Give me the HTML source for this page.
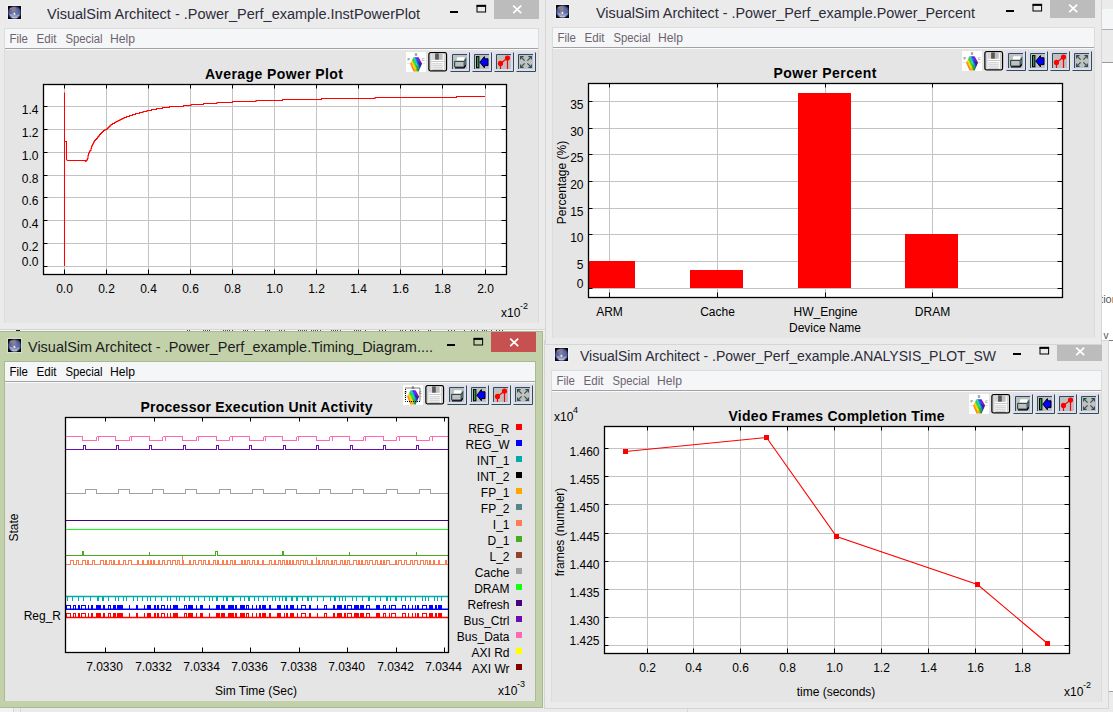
<!DOCTYPE html>
<html><head><meta charset="utf-8"><title>VisualSim Architect plots</title>
<style>
html,body{margin:0;padding:0}
body{width:1113px;height:712px;overflow:hidden;background:#ececec;font-family:"Liberation Sans", sans-serif}
#root{position:relative;width:1113px;height:712px;overflow:hidden;background:#ececec}
.a{position:absolute;display:block}
svg text{white-space:pre}
</style></head><body><div id="root">

<div class="a" style="left:0;top:329px;width:545px;height:2px;background:#f4f4f4"></div>
<svg class="a" style="left:0;top:0" width="560" height="332"><path d="M187 330.5 h1 M189 330.5 h1 M203 330.5 h1 M205 330.5 h1 M207 330.5 h1 M209 330.5 h1 M223 330.5 h1 M225 330.5 h1 M227 330.5 h1 M229 330.5 h1 M232 330.5 h1 M243 330.5 h1 M245 330.5 h1 M247 330.5 h1 M254 330.5 h1 M265 330.5 h1 M267 330.5 h1 M269 330.5 h1 M279 330.5 h1 M281 330.5 h1 M284 330.5 h1 M298 330.5 h1 M300 330.5 h1 M302 330.5 h1 M304 330.5 h1 M306 330.5 h1 M311 330.5 h1 M313 330.5 h1 M315 330.5 h1 M317 330.5 h1 M320 330.5 h1 M331 330.5 h1 M333 330.5 h1 M335 330.5 h1 M337 330.5 h1 M340 330.5 h1 M354 330.5 h1 M356 330.5 h1 M358 330.5 h1 M360 330.5 h1 M365 330.5 h1 M379 330.5 h1 M382 330.5 h1 M385 330.5 h1 M400 330.5 h1 M402 330.5 h1 M405 330.5 h1 M410 330.5 h1 M412 330.5 h1 M415 330.5 h1 M418 330.5 h1 M428 330.5 h1 M430 330.5 h1 M448 330.5 h1 M451 330.5 h1 M454 330.5 h1 M464 330.5 h1 M471 330.5 h1 M474 330.5 h1 M477 330.5 h1 M482 330.5 h1 M484 330.5 h1 M486 330.5 h1 M491 330.5 h1 M496 330.5 h1 M499 330.5 h1 M502 330.5 h1 " stroke="#3a2a3a" stroke-width="1" opacity=".85" shape-rendering="crispEdges"/></svg>
<div class="a" style="left:16px;top:330px;width:4px;height:1px;background:#222"></div>
<div class="a" style="left:1102px;top:0;width:11px;height:344px;background:#ffffff"></div>
<div class="a" style="left:1102px;top:0;width:11px;height:9px;background:#ebebeb"></div>
<div class="a" style="left:1102px;top:9px;width:11px;height:20px;background:#f5f6f7"></div>
<div class="a" style="left:1102px;top:29px;width:11px;height:1px;background:#b0b0b0"></div>
<div class="a" style="left:1102px;top:30px;width:11px;height:32px;background:#ebebeb"></div>
<div class="a" style="left:1102px;top:62px;width:11px;height:1px;background:#9a9a9a"></div>
<div class="a" style="left:1102px;top:292px;font-size:11px;color:#555;line-height:14px;white-space:nowrap;font-family:"Liberation Sans", sans-serif"><span style="margin-left:-8px">ation</span></div>
<div class="a" style="left:1103.5px;top:329px;font-size:10px;color:#555;line-height:14px;white-space:nowrap;font-family:"Liberation Sans", sans-serif">v_</div>
<div class="a" style="left:1102px;top:341px;width:7px;height:4px;background:#e4e4e4"></div>
<div class="a" style="left:1109px;top:344px;width:4px;height:347px;background:#ffffff"></div>
<div class="a" style="left:1109px;top:691px;width:4px;height:1px;background:#a0a0a0"></div>
<div class="a" style="left:1109px;top:692px;width:4px;height:20px;background:#ececec"></div>
<div class="a" style="left:0;top:708px;width:1113px;height:4px;background:#ebebeb"></div>
<div class="a" style="left:0;top:708px;width:13px;height:4px;background:#f3f3f3"></div>
<div class="a" style="left:13px;top:708px;width:1px;height:4px;background:#d6d6d6"></div>
<div class="a" style="left:20px;top:708px;width:1px;height:4px;background:#d6d6d6"></div>
<div class="a" style="left:687px;top:709px;width:1px;height:3px;background:#d6d6d6"></div>
<div class="a" style="left:544px;top:340px;width:565px;height:369px;background:#ebebeb;box-shadow:inset 0 0 0 1px #d5d5d5"></div><div class="a" style="left:551px;top:370px;width:551px;height:332px;background:#dcdcdc"></div><svg class="a" style="left:554px;top:347px" width="15" height="15" viewBox="-1 -1 15 15"><defs><radialGradient id="eg" cx="0.5" cy="0.5" r="0.5"><stop offset="0" stop-color="#7682b0"/><stop offset="0.75" stop-color="#55629e"/><stop offset="1" stop-color="#2c346c"/></radialGradient><clipPath id="ec"><rect x="0.2" y="0.2" width="12.6" height="12.6" rx="5.4"/></clipPath></defs><rect x="-0.7" y="-0.7" width="14.4" height="14.4" fill="none" stroke="#ffffff" stroke-opacity="0.45" stroke-width="0.8"/><rect width="13" height="13" fill="#050508"/><g clip-path="url(#ec)"><rect width="13" height="13" fill="url(#eg)"/><path d="M1.6 2.6 Q4.6 0.6 7.6 1.4 L8 2.6 Q5 2.2 2.2 3.8 Z" fill="#b88a6a" opacity=".85"/><path d="M3.2 3.4 L7.4 2.8 L7.8 4.6 L5.2 5 L3.4 4.6 Z" fill="#8a8aa8" opacity=".8"/><path d="M3.8 5.8 L5.6 5.2 L6 6.6 L4.6 7.2 Z" fill="#c87838" opacity=".9"/><path d="M5.2 7.2 L6.8 6.8 L7.6 8.6 L6.6 9.2 Z" fill="#f4f6fa"/><path d="M1.2 7.6 Q3.4 8.4 5.4 8 L6.4 9.6 Q9 9.2 11.6 7.8 L11.4 9.8 Q9 12.6 4 12 Q1.8 10.6 1.2 7.6 Z" fill="#a4acc8" opacity=".85"/><path d="M3.4 11 Q6.4 11.8 9.6 11 L8.6 12.4 H4.6 Z" fill="#d4dce8" opacity=".9"/></g></svg><svg class="a" style="left:580px;top:340px" width="420" height="31"><text x="0" y="21" font-size="15.5" fill="#2b2b3a" textLength="416" lengthAdjust="spacingAndGlyphs" font-family='"Liberation Sans", sans-serif'>VisualSim Architect - .Power_Perf_example.ANALYSIS_PLOT_SW</text></svg><div class="a" style="left:1057px;top:341px;width:45px;height:20px;background:#bcbcbc"></div><svg class="a" style="left:1057px;top:341px" width="45" height="20"><path d="M19.2 6.6 L27.2 14.2 M27.2 6.6 L19.2 14.2" stroke="#fff" stroke-width="1.7" fill="none"/></svg><svg class="a" style="left:1038.5px;top:346.3px" width="12" height="10"><rect x="1" y="2" width="8.6" height="6" fill="none" stroke="#000" stroke-width="1"/><rect x="0.5" y="0.8" width="9.6" height="2" fill="#000"/></svg><div class="a" style="left:1013px;top:352.6px;width:8px;height:2.6px;background:#000"></div><div class="a" style="left:552px;top:371px;width:549px;height:19px;background:#f5f6f7"></div><div class="a" style="left:552px;top:390px;width:549px;height:1px;background:#a2a2a2"></div><div class="a" style="left:552px;top:391px;width:549px;height:1px;background:#fafafa"></div><svg class="a" style="left:552px;top:371px" width="160" height="19"><g font-size="12.5" fill="#6d6370" font-family='"Liberation Sans", sans-serif'><text x="4.5" y="14.2" textLength="18.5" lengthAdjust="spacingAndGlyphs">File</text><text x="31.5" y="14.2" textLength="20" lengthAdjust="spacingAndGlyphs">Edit</text><text x="60.5" y="14.2" textLength="37" lengthAdjust="spacingAndGlyphs">Special</text><text x="105" y="14.2" textLength="25" lengthAdjust="spacingAndGlyphs">Help</text></g></svg><div class="a" style="left:552px;top:392px;width:549px;height:310px;background:#e5e5e5"></div><svg class="a" style="left:969px;top:394px" width="20" height="20" viewBox="0 0 20 20"><rect width="20" height="20" fill="#ffffff"/><defs><clipPath id="hx"><path d="M7.4 5.2 H12.6 L16 11.6 L12.6 19.6 H7.6 L4.2 11.8 Z"/></clipPath><linearGradient id="hg" gradientUnits="userSpaceOnUse" x1="3.8" y1="15" x2="16.2" y2="9"><stop offset="0" stop-color="#d01010"/><stop offset="0.14" stop-color="#ff6a00"/><stop offset="0.3" stop-color="#ffe400"/><stop offset="0.44" stop-color="#28d028"/><stop offset="0.56" stop-color="#20dcc0"/><stop offset="0.7" stop-color="#2038ff"/><stop offset="0.85" stop-color="#a018e0"/><stop offset="1" stop-color="#e0009c"/></linearGradient><linearGradient id="hd" x1="0" y1="0" x2="1" y2="0.35"><stop offset="0.62" stop-color="#100030" stop-opacity="0"/><stop offset="1" stop-color="#100030" stop-opacity="0.55"/></linearGradient></defs><g clip-path="url(#hx)"><rect x="3" y="4" width="14" height="16" fill="url(#hg)"/><path d="M4 9 L16 15 M4 12.5 L14 18 M7 5.5 L16 11 M4 15.5 L10 19.5" stroke="#fff" stroke-opacity=".25" stroke-width=".6"/><rect x="3" y="4" width="14" height="16" fill="url(#hd)"/></g><text x="10" y="4.2" font-size="3.6" text-anchor="middle" fill="#333" font-family='"Liberation Sans", sans-serif'>B</text><text x="2.8" y="8.8" font-size="3.6" text-anchor="middle" fill="#333" font-family='"Liberation Sans", sans-serif'>P</text><text x="17.2" y="8.8" font-size="3.6" text-anchor="middle" fill="#333" font-family='"Liberation Sans", sans-serif'>C</text><path d="M1 11.5 H3.6 M16.6 11.5 H19" stroke="#ccc" stroke-width=".6"/></svg><svg class="a" style="left:991px;top:394px" width="20" height="20" viewBox="0 0 20 20"><rect x="0.9" y="0.7" width="17.6" height="18.2" rx="1.7" fill="#fff" stroke="#000" stroke-width="1.3"/><rect x="2" y="1.6" width="1.5" height="16.6" fill="#cfcfcf"/><rect x="15.9" y="1.6" width="1.5" height="16.6" fill="#cfcfcf"/><rect x="3.5" y="1.4" width="11.6" height="6.4" fill="#d6d6d6"/><rect x="7.1" y="1.4" width="3.8" height="6.3" fill="#585858"/><rect x="10.9" y="1.4" width="3.3" height="6.3" fill="#bebebe"/><rect x="3.5" y="9" width="12.4" height="1" fill="#c8c8c8"/><rect x="4.2" y="11.4" width="10.6" height="0.9" fill="#bdbdbd"/><rect x="4.2" y="13.4" width="10.6" height="0.9" fill="#bdbdbd"/><rect x="4.2" y="15.4" width="10.6" height="0.9" fill="#bdbdbd"/><rect x="4.2" y="17.2" width="10.6" height="0.8" fill="#bdbdbd"/></svg><svg class="a" style="left:1013px;top:394px" width="20" height="20" viewBox="0 0 20 20"><rect width="20" height="20" fill="#dcdcf4"/><rect x="3" y="3" width="14" height="14" fill="#c0c0c0"/><path d="M2.5 17 V2.5 H17" fill="none" stroke="#2f4f4f" stroke-width="1"/><path d="M0.5 19.5 H19.5 V0.5" fill="none" stroke="#2f4f4f" stroke-width="1"/><path d="M6.2 9.4 L7.4 5.2 H14.6 L13.6 9.4 Z" fill="#fff"/><rect x="4.6" y="9.4" width="9.6" height="5.6" rx="0.8" fill="#c0c0c0" stroke="#2f4f4f" stroke-width="1.2"/><path d="M14.2 9.4 L15.8 7 V12.6 L14.2 15" fill="none" stroke="#2f4f4f" stroke-width="1.1"/><path d="M5 15.8 H14 L15.8 13.4" fill="none" stroke="#000" stroke-width="1.2"/></svg><svg class="a" style="left:1035px;top:394px" width="20" height="20" viewBox="0 0 20 20"><rect width="20" height="20" fill="#dcdcf4"/><rect x="3" y="3" width="14" height="14" fill="#c0c0c0"/><path d="M2.5 17 V2.5 H17" fill="none" stroke="#2f4f4f" stroke-width="1"/><path d="M0.5 19.5 H19.5 V0.5" fill="none" stroke="#2f4f4f" stroke-width="1"/><rect x="4.5" y="4.6" width="2.4" height="11.2" fill="#2e9a50" stroke="#000" stroke-width="1"/><path d="M7.8 10.2 L12.4 4.6 V6.8 H16 V13.6 H12.4 V15.8 Z" fill="#0000ff" stroke="#000" stroke-width="1" stroke-linejoin="miter"/></svg><svg class="a" style="left:1057px;top:394px" width="20" height="20" viewBox="0 0 20 20"><rect width="20" height="20" fill="#dcdcf4"/><rect x="3" y="3" width="14" height="14" fill="#c0c0c0"/><path d="M2.5 17 V2.5 H17" fill="none" stroke="#2f4f4f" stroke-width="1"/><path d="M0.5 19.5 H19.5 V0.5" fill="none" stroke="#2f4f4f" stroke-width="1"/><path d="M6.5 11.4 V17 M13.5 6 V17 M6.5 11.4 L13.5 6" stroke="#ff0000" stroke-width="1.2" fill="none"/><circle cx="6.5" cy="11.4" r="2.6" fill="#ff0000"/><circle cx="13.5" cy="6" r="2.6" fill="#ff0000"/></svg><svg class="a" style="left:1079px;top:394px" width="20" height="20" viewBox="0 0 20 20"><rect width="20" height="20" fill="#dcdcf4"/><rect x="3" y="3" width="14" height="14" fill="#c0c0c0"/><path d="M2.5 17 V2.5 H17" fill="none" stroke="#2f4f4f" stroke-width="1"/><path d="M0.5 19.5 H19.5 V0.5" fill="none" stroke="#2f4f4f" stroke-width="1"/><g stroke="#2f4f4f" stroke-width="1.1" fill="none"><path d="M8.6 8.6 L4.6 4.6 M4.6 7.6 V4.6 H7.6"/><path d="M11.4 8.6 L15.4 4.6 M12.4 4.6 H15.4 V7.6"/><path d="M8.6 11.4 L4.6 15.4 M4.6 12.4 V15.4 H7.6"/><path d="M11.4 11.4 L15.4 15.4 M12.4 15.4 H15.4 V12.4"/></g></svg>
<div class="a" style="left:-3px;top:-2px;width:549px;height:332px;background:#ebebeb;box-shadow:inset 0 0 0 1px #d5d5d5"></div><div class="a" style="left:4px;top:28px;width:535px;height:295px;background:#dcdcdc"></div><svg class="a" style="left:7px;top:5px" width="15" height="15" viewBox="-1 -1 15 15"><defs><radialGradient id="eg" cx="0.5" cy="0.5" r="0.5"><stop offset="0" stop-color="#7682b0"/><stop offset="0.75" stop-color="#55629e"/><stop offset="1" stop-color="#2c346c"/></radialGradient><clipPath id="ec"><rect x="0.2" y="0.2" width="12.6" height="12.6" rx="5.4"/></clipPath></defs><rect x="-0.7" y="-0.7" width="14.4" height="14.4" fill="none" stroke="#ffffff" stroke-opacity="0.45" stroke-width="0.8"/><rect width="13" height="13" fill="#050508"/><g clip-path="url(#ec)"><rect width="13" height="13" fill="url(#eg)"/><path d="M1.6 2.6 Q4.6 0.6 7.6 1.4 L8 2.6 Q5 2.2 2.2 3.8 Z" fill="#b88a6a" opacity=".85"/><path d="M3.2 3.4 L7.4 2.8 L7.8 4.6 L5.2 5 L3.4 4.6 Z" fill="#8a8aa8" opacity=".8"/><path d="M3.8 5.8 L5.6 5.2 L6 6.6 L4.6 7.2 Z" fill="#c87838" opacity=".9"/><path d="M5.2 7.2 L6.8 6.8 L7.6 8.6 L6.6 9.2 Z" fill="#f4f6fa"/><path d="M1.2 7.6 Q3.4 8.4 5.4 8 L6.4 9.6 Q9 9.2 11.6 7.8 L11.4 9.8 Q9 12.6 4 12 Q1.8 10.6 1.2 7.6 Z" fill="#a4acc8" opacity=".85"/><path d="M3.4 11 Q6.4 11.8 9.6 11 L8.6 12.4 H4.6 Z" fill="#d4dce8" opacity=".9"/></g></svg><svg class="a" style="left:47px;top:-2px" width="377" height="31"><text x="0" y="21" font-size="15.5" fill="#2b2b3a" textLength="373" lengthAdjust="spacingAndGlyphs" font-family='"Liberation Sans", sans-serif'>VisualSim Architect - .Power_Perf_example.InstPowerPlot</text></svg><div class="a" style="left:494px;top:-1px;width:45px;height:20px;background:#bcbcbc"></div><svg class="a" style="left:494px;top:-1px" width="45" height="20"><path d="M19.2 6.6 L27.2 14.2 M27.2 6.6 L19.2 14.2" stroke="#fff" stroke-width="1.7" fill="none"/></svg><svg class="a" style="left:475.5px;top:4.3px" width="12" height="10"><rect x="1" y="2" width="8.6" height="6" fill="none" stroke="#000" stroke-width="1"/><rect x="0.5" y="0.8" width="9.6" height="2" fill="#000"/></svg><div class="a" style="left:450px;top:10.6px;width:8px;height:2.6px;background:#000"></div><div class="a" style="left:5px;top:29px;width:533px;height:19px;background:#f5f6f7"></div><div class="a" style="left:5px;top:48px;width:533px;height:1px;background:#a2a2a2"></div><div class="a" style="left:5px;top:49px;width:533px;height:1px;background:#fafafa"></div><svg class="a" style="left:5px;top:29px" width="160" height="19"><g font-size="12.5" fill="#6d6370" font-family='"Liberation Sans", sans-serif'><text x="4.5" y="14.2" textLength="18.5" lengthAdjust="spacingAndGlyphs">File</text><text x="31.5" y="14.2" textLength="20" lengthAdjust="spacingAndGlyphs">Edit</text><text x="60.5" y="14.2" textLength="37" lengthAdjust="spacingAndGlyphs">Special</text><text x="105" y="14.2" textLength="25" lengthAdjust="spacingAndGlyphs">Help</text></g></svg><div class="a" style="left:5px;top:50px;width:533px;height:273px;background:#e5e5e5"></div><svg class="a" style="left:406px;top:52px" width="20" height="20" viewBox="0 0 20 20"><rect width="20" height="20" fill="#ffffff"/><defs><clipPath id="hx"><path d="M7.4 5.2 H12.6 L16 11.6 L12.6 19.6 H7.6 L4.2 11.8 Z"/></clipPath><linearGradient id="hg" gradientUnits="userSpaceOnUse" x1="3.8" y1="15" x2="16.2" y2="9"><stop offset="0" stop-color="#d01010"/><stop offset="0.14" stop-color="#ff6a00"/><stop offset="0.3" stop-color="#ffe400"/><stop offset="0.44" stop-color="#28d028"/><stop offset="0.56" stop-color="#20dcc0"/><stop offset="0.7" stop-color="#2038ff"/><stop offset="0.85" stop-color="#a018e0"/><stop offset="1" stop-color="#e0009c"/></linearGradient><linearGradient id="hd" x1="0" y1="0" x2="1" y2="0.35"><stop offset="0.62" stop-color="#100030" stop-opacity="0"/><stop offset="1" stop-color="#100030" stop-opacity="0.55"/></linearGradient></defs><g clip-path="url(#hx)"><rect x="3" y="4" width="14" height="16" fill="url(#hg)"/><path d="M4 9 L16 15 M4 12.5 L14 18 M7 5.5 L16 11 M4 15.5 L10 19.5" stroke="#fff" stroke-opacity=".25" stroke-width=".6"/><rect x="3" y="4" width="14" height="16" fill="url(#hd)"/></g><text x="10" y="4.2" font-size="3.6" text-anchor="middle" fill="#333" font-family='"Liberation Sans", sans-serif'>B</text><text x="2.8" y="8.8" font-size="3.6" text-anchor="middle" fill="#333" font-family='"Liberation Sans", sans-serif'>P</text><text x="17.2" y="8.8" font-size="3.6" text-anchor="middle" fill="#333" font-family='"Liberation Sans", sans-serif'>C</text><path d="M1 11.5 H3.6 M16.6 11.5 H19" stroke="#ccc" stroke-width=".6"/></svg><svg class="a" style="left:428px;top:52px" width="20" height="20" viewBox="0 0 20 20"><rect x="0.9" y="0.7" width="17.6" height="18.2" rx="1.7" fill="#fff" stroke="#000" stroke-width="1.3"/><rect x="2" y="1.6" width="1.5" height="16.6" fill="#cfcfcf"/><rect x="15.9" y="1.6" width="1.5" height="16.6" fill="#cfcfcf"/><rect x="3.5" y="1.4" width="11.6" height="6.4" fill="#d6d6d6"/><rect x="7.1" y="1.4" width="3.8" height="6.3" fill="#585858"/><rect x="10.9" y="1.4" width="3.3" height="6.3" fill="#bebebe"/><rect x="3.5" y="9" width="12.4" height="1" fill="#c8c8c8"/><rect x="4.2" y="11.4" width="10.6" height="0.9" fill="#bdbdbd"/><rect x="4.2" y="13.4" width="10.6" height="0.9" fill="#bdbdbd"/><rect x="4.2" y="15.4" width="10.6" height="0.9" fill="#bdbdbd"/><rect x="4.2" y="17.2" width="10.6" height="0.8" fill="#bdbdbd"/></svg><svg class="a" style="left:450px;top:52px" width="20" height="20" viewBox="0 0 20 20"><rect width="20" height="20" fill="#dcdcf4"/><rect x="3" y="3" width="14" height="14" fill="#c0c0c0"/><path d="M2.5 17 V2.5 H17" fill="none" stroke="#2f4f4f" stroke-width="1"/><path d="M0.5 19.5 H19.5 V0.5" fill="none" stroke="#2f4f4f" stroke-width="1"/><path d="M6.2 9.4 L7.4 5.2 H14.6 L13.6 9.4 Z" fill="#fff"/><rect x="4.6" y="9.4" width="9.6" height="5.6" rx="0.8" fill="#c0c0c0" stroke="#2f4f4f" stroke-width="1.2"/><path d="M14.2 9.4 L15.8 7 V12.6 L14.2 15" fill="none" stroke="#2f4f4f" stroke-width="1.1"/><path d="M5 15.8 H14 L15.8 13.4" fill="none" stroke="#000" stroke-width="1.2"/></svg><svg class="a" style="left:472px;top:52px" width="20" height="20" viewBox="0 0 20 20"><rect width="20" height="20" fill="#dcdcf4"/><rect x="3" y="3" width="14" height="14" fill="#c0c0c0"/><path d="M2.5 17 V2.5 H17" fill="none" stroke="#2f4f4f" stroke-width="1"/><path d="M0.5 19.5 H19.5 V0.5" fill="none" stroke="#2f4f4f" stroke-width="1"/><rect x="4.5" y="4.6" width="2.4" height="11.2" fill="#2e9a50" stroke="#000" stroke-width="1"/><path d="M7.8 10.2 L12.4 4.6 V6.8 H16 V13.6 H12.4 V15.8 Z" fill="#0000ff" stroke="#000" stroke-width="1" stroke-linejoin="miter"/></svg><svg class="a" style="left:494px;top:52px" width="20" height="20" viewBox="0 0 20 20"><rect width="20" height="20" fill="#dcdcf4"/><rect x="3" y="3" width="14" height="14" fill="#c0c0c0"/><path d="M2.5 17 V2.5 H17" fill="none" stroke="#2f4f4f" stroke-width="1"/><path d="M0.5 19.5 H19.5 V0.5" fill="none" stroke="#2f4f4f" stroke-width="1"/><path d="M6.5 11.4 V17 M13.5 6 V17 M6.5 11.4 L13.5 6" stroke="#ff0000" stroke-width="1.2" fill="none"/><circle cx="6.5" cy="11.4" r="2.6" fill="#ff0000"/><circle cx="13.5" cy="6" r="2.6" fill="#ff0000"/></svg><svg class="a" style="left:516px;top:52px" width="20" height="20" viewBox="0 0 20 20"><rect width="20" height="20" fill="#dcdcf4"/><rect x="3" y="3" width="14" height="14" fill="#c0c0c0"/><path d="M2.5 17 V2.5 H17" fill="none" stroke="#2f4f4f" stroke-width="1"/><path d="M0.5 19.5 H19.5 V0.5" fill="none" stroke="#2f4f4f" stroke-width="1"/><g stroke="#2f4f4f" stroke-width="1.1" fill="none"><path d="M8.6 8.6 L4.6 4.6 M4.6 7.6 V4.6 H7.6"/><path d="M11.4 8.6 L15.4 4.6 M12.4 4.6 H15.4 V7.6"/><path d="M8.6 11.4 L4.6 15.4 M4.6 12.4 V15.4 H7.6"/><path d="M11.4 11.4 L15.4 15.4 M12.4 15.4 H15.4 V12.4"/></g></svg>
<div class="a" style="left:545px;top:-3px;width:557px;height:348px;background:#ebebeb;box-shadow:inset 0 0 0 1px #d5d5d5"></div><div class="a" style="left:552px;top:27px;width:543px;height:311px;background:#dcdcdc"></div><svg class="a" style="left:555px;top:4px" width="15" height="15" viewBox="-1 -1 15 15"><defs><radialGradient id="eg" cx="0.5" cy="0.5" r="0.5"><stop offset="0" stop-color="#7682b0"/><stop offset="0.75" stop-color="#55629e"/><stop offset="1" stop-color="#2c346c"/></radialGradient><clipPath id="ec"><rect x="0.2" y="0.2" width="12.6" height="12.6" rx="5.4"/></clipPath></defs><rect x="-0.7" y="-0.7" width="14.4" height="14.4" fill="none" stroke="#ffffff" stroke-opacity="0.45" stroke-width="0.8"/><rect width="13" height="13" fill="#050508"/><g clip-path="url(#ec)"><rect width="13" height="13" fill="url(#eg)"/><path d="M1.6 2.6 Q4.6 0.6 7.6 1.4 L8 2.6 Q5 2.2 2.2 3.8 Z" fill="#b88a6a" opacity=".85"/><path d="M3.2 3.4 L7.4 2.8 L7.8 4.6 L5.2 5 L3.4 4.6 Z" fill="#8a8aa8" opacity=".8"/><path d="M3.8 5.8 L5.6 5.2 L6 6.6 L4.6 7.2 Z" fill="#c87838" opacity=".9"/><path d="M5.2 7.2 L6.8 6.8 L7.6 8.6 L6.6 9.2 Z" fill="#f4f6fa"/><path d="M1.2 7.6 Q3.4 8.4 5.4 8 L6.4 9.6 Q9 9.2 11.6 7.8 L11.4 9.8 Q9 12.6 4 12 Q1.8 10.6 1.2 7.6 Z" fill="#a4acc8" opacity=".85"/><path d="M3.4 11 Q6.4 11.8 9.6 11 L8.6 12.4 H4.6 Z" fill="#d4dce8" opacity=".9"/></g></svg><svg class="a" style="left:596px;top:-3px" width="383" height="31"><text x="0" y="21" font-size="15.5" fill="#2b2b3a" textLength="379" lengthAdjust="spacingAndGlyphs" font-family='"Liberation Sans", sans-serif'>VisualSim Architect - .Power_Perf_example.Power_Percent</text></svg><div class="a" style="left:1050px;top:-2px;width:45px;height:20px;background:#bcbcbc"></div><svg class="a" style="left:1050px;top:-2px" width="45" height="20"><path d="M19.2 6.6 L27.2 14.2 M27.2 6.6 L19.2 14.2" stroke="#fff" stroke-width="1.7" fill="none"/></svg><svg class="a" style="left:1031.5px;top:3.3px" width="12" height="10"><rect x="1" y="2" width="8.6" height="6" fill="none" stroke="#000" stroke-width="1"/><rect x="0.5" y="0.8" width="9.6" height="2" fill="#000"/></svg><div class="a" style="left:1006px;top:9.6px;width:8px;height:2.6px;background:#000"></div><div class="a" style="left:553px;top:28px;width:541px;height:19px;background:#f5f6f7"></div><div class="a" style="left:553px;top:47px;width:541px;height:1px;background:#a2a2a2"></div><div class="a" style="left:553px;top:48px;width:541px;height:1px;background:#fafafa"></div><svg class="a" style="left:553px;top:28px" width="160" height="19"><g font-size="12.5" fill="#6d6370" font-family='"Liberation Sans", sans-serif'><text x="4.5" y="14.2" textLength="18.5" lengthAdjust="spacingAndGlyphs">File</text><text x="31.5" y="14.2" textLength="20" lengthAdjust="spacingAndGlyphs">Edit</text><text x="60.5" y="14.2" textLength="37" lengthAdjust="spacingAndGlyphs">Special</text><text x="105" y="14.2" textLength="25" lengthAdjust="spacingAndGlyphs">Help</text></g></svg><div class="a" style="left:553px;top:49px;width:541px;height:289px;background:#e5e5e5"></div><svg class="a" style="left:962px;top:51px" width="20" height="20" viewBox="0 0 20 20"><rect width="20" height="20" fill="#ffffff"/><defs><clipPath id="hx"><path d="M7.4 5.2 H12.6 L16 11.6 L12.6 19.6 H7.6 L4.2 11.8 Z"/></clipPath><linearGradient id="hg" gradientUnits="userSpaceOnUse" x1="3.8" y1="15" x2="16.2" y2="9"><stop offset="0" stop-color="#d01010"/><stop offset="0.14" stop-color="#ff6a00"/><stop offset="0.3" stop-color="#ffe400"/><stop offset="0.44" stop-color="#28d028"/><stop offset="0.56" stop-color="#20dcc0"/><stop offset="0.7" stop-color="#2038ff"/><stop offset="0.85" stop-color="#a018e0"/><stop offset="1" stop-color="#e0009c"/></linearGradient><linearGradient id="hd" x1="0" y1="0" x2="1" y2="0.35"><stop offset="0.62" stop-color="#100030" stop-opacity="0"/><stop offset="1" stop-color="#100030" stop-opacity="0.55"/></linearGradient></defs><g clip-path="url(#hx)"><rect x="3" y="4" width="14" height="16" fill="url(#hg)"/><path d="M4 9 L16 15 M4 12.5 L14 18 M7 5.5 L16 11 M4 15.5 L10 19.5" stroke="#fff" stroke-opacity=".25" stroke-width=".6"/><rect x="3" y="4" width="14" height="16" fill="url(#hd)"/></g><text x="10" y="4.2" font-size="3.6" text-anchor="middle" fill="#333" font-family='"Liberation Sans", sans-serif'>B</text><text x="2.8" y="8.8" font-size="3.6" text-anchor="middle" fill="#333" font-family='"Liberation Sans", sans-serif'>P</text><text x="17.2" y="8.8" font-size="3.6" text-anchor="middle" fill="#333" font-family='"Liberation Sans", sans-serif'>C</text><path d="M1 11.5 H3.6 M16.6 11.5 H19" stroke="#ccc" stroke-width=".6"/></svg><svg class="a" style="left:984px;top:51px" width="20" height="20" viewBox="0 0 20 20"><rect x="0.9" y="0.7" width="17.6" height="18.2" rx="1.7" fill="#fff" stroke="#000" stroke-width="1.3"/><rect x="2" y="1.6" width="1.5" height="16.6" fill="#cfcfcf"/><rect x="15.9" y="1.6" width="1.5" height="16.6" fill="#cfcfcf"/><rect x="3.5" y="1.4" width="11.6" height="6.4" fill="#d6d6d6"/><rect x="7.1" y="1.4" width="3.8" height="6.3" fill="#585858"/><rect x="10.9" y="1.4" width="3.3" height="6.3" fill="#bebebe"/><rect x="3.5" y="9" width="12.4" height="1" fill="#c8c8c8"/><rect x="4.2" y="11.4" width="10.6" height="0.9" fill="#bdbdbd"/><rect x="4.2" y="13.4" width="10.6" height="0.9" fill="#bdbdbd"/><rect x="4.2" y="15.4" width="10.6" height="0.9" fill="#bdbdbd"/><rect x="4.2" y="17.2" width="10.6" height="0.8" fill="#bdbdbd"/></svg><svg class="a" style="left:1006px;top:51px" width="20" height="20" viewBox="0 0 20 20"><rect width="20" height="20" fill="#dcdcf4"/><rect x="3" y="3" width="14" height="14" fill="#c0c0c0"/><path d="M2.5 17 V2.5 H17" fill="none" stroke="#2f4f4f" stroke-width="1"/><path d="M0.5 19.5 H19.5 V0.5" fill="none" stroke="#2f4f4f" stroke-width="1"/><path d="M6.2 9.4 L7.4 5.2 H14.6 L13.6 9.4 Z" fill="#fff"/><rect x="4.6" y="9.4" width="9.6" height="5.6" rx="0.8" fill="#c0c0c0" stroke="#2f4f4f" stroke-width="1.2"/><path d="M14.2 9.4 L15.8 7 V12.6 L14.2 15" fill="none" stroke="#2f4f4f" stroke-width="1.1"/><path d="M5 15.8 H14 L15.8 13.4" fill="none" stroke="#000" stroke-width="1.2"/></svg><svg class="a" style="left:1028px;top:51px" width="20" height="20" viewBox="0 0 20 20"><rect width="20" height="20" fill="#dcdcf4"/><rect x="3" y="3" width="14" height="14" fill="#c0c0c0"/><path d="M2.5 17 V2.5 H17" fill="none" stroke="#2f4f4f" stroke-width="1"/><path d="M0.5 19.5 H19.5 V0.5" fill="none" stroke="#2f4f4f" stroke-width="1"/><rect x="4.5" y="4.6" width="2.4" height="11.2" fill="#2e9a50" stroke="#000" stroke-width="1"/><path d="M7.8 10.2 L12.4 4.6 V6.8 H16 V13.6 H12.4 V15.8 Z" fill="#0000ff" stroke="#000" stroke-width="1" stroke-linejoin="miter"/></svg><svg class="a" style="left:1050px;top:51px" width="20" height="20" viewBox="0 0 20 20"><rect width="20" height="20" fill="#dcdcf4"/><rect x="3" y="3" width="14" height="14" fill="#c0c0c0"/><path d="M2.5 17 V2.5 H17" fill="none" stroke="#2f4f4f" stroke-width="1"/><path d="M0.5 19.5 H19.5 V0.5" fill="none" stroke="#2f4f4f" stroke-width="1"/><path d="M6.5 11.4 V17 M13.5 6 V17 M6.5 11.4 L13.5 6" stroke="#ff0000" stroke-width="1.2" fill="none"/><circle cx="6.5" cy="11.4" r="2.6" fill="#ff0000"/><circle cx="13.5" cy="6" r="2.6" fill="#ff0000"/></svg><svg class="a" style="left:1072px;top:51px" width="20" height="20" viewBox="0 0 20 20"><rect width="20" height="20" fill="#dcdcf4"/><rect x="3" y="3" width="14" height="14" fill="#c0c0c0"/><path d="M2.5 17 V2.5 H17" fill="none" stroke="#2f4f4f" stroke-width="1"/><path d="M0.5 19.5 H19.5 V0.5" fill="none" stroke="#2f4f4f" stroke-width="1"/><g stroke="#2f4f4f" stroke-width="1.1" fill="none"><path d="M8.6 8.6 L4.6 4.6 M4.6 7.6 V4.6 H7.6"/><path d="M11.4 8.6 L15.4 4.6 M12.4 4.6 H15.4 V7.6"/><path d="M8.6 11.4 L4.6 15.4 M4.6 12.4 V15.4 H7.6"/><path d="M11.4 11.4 L15.4 15.4 M12.4 15.4 H15.4 V12.4"/></g></svg>
<div class="a" style="left:-3px;top:331px;width:546px;height:377px;background:#c3d1ab;box-shadow:inset 0 0 0 1px #a9b994"></div><div class="a" style="left:4px;top:361px;width:532px;height:340px;background:#a9b994"></div><svg class="a" style="left:7px;top:338px" width="15" height="15" viewBox="-1 -1 15 15"><defs><radialGradient id="eg" cx="0.5" cy="0.5" r="0.5"><stop offset="0" stop-color="#7682b0"/><stop offset="0.75" stop-color="#55629e"/><stop offset="1" stop-color="#2c346c"/></radialGradient><clipPath id="ec"><rect x="0.2" y="0.2" width="12.6" height="12.6" rx="5.4"/></clipPath></defs><rect x="-0.7" y="-0.7" width="14.4" height="14.4" fill="none" stroke="#ffffff" stroke-opacity="0.45" stroke-width="0.8"/><rect width="13" height="13" fill="#050508"/><g clip-path="url(#ec)"><rect width="13" height="13" fill="url(#eg)"/><path d="M1.6 2.6 Q4.6 0.6 7.6 1.4 L8 2.6 Q5 2.2 2.2 3.8 Z" fill="#b88a6a" opacity=".85"/><path d="M3.2 3.4 L7.4 2.8 L7.8 4.6 L5.2 5 L3.4 4.6 Z" fill="#8a8aa8" opacity=".8"/><path d="M3.8 5.8 L5.6 5.2 L6 6.6 L4.6 7.2 Z" fill="#c87838" opacity=".9"/><path d="M5.2 7.2 L6.8 6.8 L7.6 8.6 L6.6 9.2 Z" fill="#f4f6fa"/><path d="M1.2 7.6 Q3.4 8.4 5.4 8 L6.4 9.6 Q9 9.2 11.6 7.8 L11.4 9.8 Q9 12.6 4 12 Q1.8 10.6 1.2 7.6 Z" fill="#a4acc8" opacity=".85"/><path d="M3.4 11 Q6.4 11.8 9.6 11 L8.6 12.4 H4.6 Z" fill="#d4dce8" opacity=".9"/></g></svg><svg class="a" style="left:28px;top:331px" width="409" height="31"><text x="0" y="21" font-size="15.5" fill="#1c1c1c" textLength="405" lengthAdjust="spacingAndGlyphs" font-family='"Liberation Sans", sans-serif'>VisualSim Architect - .Power_Perf_example.Timing_Diagram....</text></svg><div class="a" style="left:491px;top:332px;width:45px;height:20px;background:#c75050"></div><svg class="a" style="left:491px;top:332px" width="45" height="20"><path d="M19.2 6.6 L27.2 14.2 M27.2 6.6 L19.2 14.2" stroke="#fff" stroke-width="1.7" fill="none"/></svg><svg class="a" style="left:472.5px;top:337.3px" width="12" height="10"><rect x="1" y="2" width="8.6" height="6" fill="none" stroke="#000" stroke-width="1"/><rect x="0.5" y="0.8" width="9.6" height="2" fill="#000"/></svg><div class="a" style="left:447px;top:343.6px;width:8px;height:2.6px;background:#000"></div><div class="a" style="left:5px;top:362px;width:530px;height:19px;background:#f5f6f7"></div><div class="a" style="left:5px;top:381px;width:530px;height:1px;background:#a2a2a2"></div><div class="a" style="left:5px;top:382px;width:530px;height:1px;background:#fafafa"></div><svg class="a" style="left:5px;top:362px" width="160" height="19"><g font-size="12.5" fill="#000" font-family='"Liberation Sans", sans-serif'><text x="4.5" y="14.2" textLength="18.5" lengthAdjust="spacingAndGlyphs">File</text><text x="31.5" y="14.2" textLength="20" lengthAdjust="spacingAndGlyphs">Edit</text><text x="60.5" y="14.2" textLength="37" lengthAdjust="spacingAndGlyphs">Special</text><text x="105" y="14.2" textLength="25" lengthAdjust="spacingAndGlyphs">Help</text></g></svg><div class="a" style="left:5px;top:383px;width:530px;height:318px;background:#e5e5e5"></div><svg class="a" style="left:403px;top:385px" width="20" height="20" viewBox="0 0 20 20"><rect width="20" height="20" fill="#ffffff"/><defs><clipPath id="hx"><path d="M7.4 5.2 H12.6 L16 11.6 L12.6 19.6 H7.6 L4.2 11.8 Z"/></clipPath><linearGradient id="hg" gradientUnits="userSpaceOnUse" x1="3.8" y1="15" x2="16.2" y2="9"><stop offset="0" stop-color="#d01010"/><stop offset="0.14" stop-color="#ff6a00"/><stop offset="0.3" stop-color="#ffe400"/><stop offset="0.44" stop-color="#28d028"/><stop offset="0.56" stop-color="#20dcc0"/><stop offset="0.7" stop-color="#2038ff"/><stop offset="0.85" stop-color="#a018e0"/><stop offset="1" stop-color="#e0009c"/></linearGradient><linearGradient id="hd" x1="0" y1="0" x2="1" y2="0.35"><stop offset="0.62" stop-color="#100030" stop-opacity="0"/><stop offset="1" stop-color="#100030" stop-opacity="0.55"/></linearGradient></defs><g clip-path="url(#hx)"><rect x="3" y="4" width="14" height="16" fill="url(#hg)"/><path d="M4 9 L16 15 M4 12.5 L14 18 M7 5.5 L16 11 M4 15.5 L10 19.5" stroke="#fff" stroke-opacity=".25" stroke-width=".6"/><rect x="3" y="4" width="14" height="16" fill="url(#hd)"/></g><text x="10" y="4.2" font-size="3.6" text-anchor="middle" fill="#333" font-family='"Liberation Sans", sans-serif'>B</text><text x="2.8" y="8.8" font-size="3.6" text-anchor="middle" fill="#333" font-family='"Liberation Sans", sans-serif'>P</text><text x="17.2" y="8.8" font-size="3.6" text-anchor="middle" fill="#333" font-family='"Liberation Sans", sans-serif'>C</text><path d="M1 11.5 H3.6 M16.6 11.5 H19" stroke="#ccc" stroke-width=".6"/><rect x="2.5" y="3" width="14.5" height="13.5" fill="none" stroke="#000" stroke-width="1" stroke-dasharray="1 1"/></svg><svg class="a" style="left:425px;top:385px" width="20" height="20" viewBox="0 0 20 20"><rect x="0.9" y="0.7" width="17.6" height="18.2" rx="1.7" fill="#fff" stroke="#000" stroke-width="1.3"/><rect x="2" y="1.6" width="1.5" height="16.6" fill="#cfcfcf"/><rect x="15.9" y="1.6" width="1.5" height="16.6" fill="#cfcfcf"/><rect x="3.5" y="1.4" width="11.6" height="6.4" fill="#d6d6d6"/><rect x="7.1" y="1.4" width="3.8" height="6.3" fill="#585858"/><rect x="10.9" y="1.4" width="3.3" height="6.3" fill="#bebebe"/><rect x="3.5" y="9" width="12.4" height="1" fill="#c8c8c8"/><rect x="4.2" y="11.4" width="10.6" height="0.9" fill="#bdbdbd"/><rect x="4.2" y="13.4" width="10.6" height="0.9" fill="#bdbdbd"/><rect x="4.2" y="15.4" width="10.6" height="0.9" fill="#bdbdbd"/><rect x="4.2" y="17.2" width="10.6" height="0.8" fill="#bdbdbd"/></svg><svg class="a" style="left:447px;top:385px" width="20" height="20" viewBox="0 0 20 20"><rect width="20" height="20" fill="#dcdcf4"/><rect x="3" y="3" width="14" height="14" fill="#c0c0c0"/><path d="M2.5 17 V2.5 H17" fill="none" stroke="#2f4f4f" stroke-width="1"/><path d="M0.5 19.5 H19.5 V0.5" fill="none" stroke="#2f4f4f" stroke-width="1"/><path d="M6.2 9.4 L7.4 5.2 H14.6 L13.6 9.4 Z" fill="#fff"/><rect x="4.6" y="9.4" width="9.6" height="5.6" rx="0.8" fill="#c0c0c0" stroke="#2f4f4f" stroke-width="1.2"/><path d="M14.2 9.4 L15.8 7 V12.6 L14.2 15" fill="none" stroke="#2f4f4f" stroke-width="1.1"/><path d="M5 15.8 H14 L15.8 13.4" fill="none" stroke="#000" stroke-width="1.2"/></svg><svg class="a" style="left:469px;top:385px" width="20" height="20" viewBox="0 0 20 20"><rect width="20" height="20" fill="#dcdcf4"/><rect x="3" y="3" width="14" height="14" fill="#c0c0c0"/><path d="M2.5 17 V2.5 H17" fill="none" stroke="#2f4f4f" stroke-width="1"/><path d="M0.5 19.5 H19.5 V0.5" fill="none" stroke="#2f4f4f" stroke-width="1"/><rect x="4.5" y="4.6" width="2.4" height="11.2" fill="#2e9a50" stroke="#000" stroke-width="1"/><path d="M7.8 10.2 L12.4 4.6 V6.8 H16 V13.6 H12.4 V15.8 Z" fill="#0000ff" stroke="#000" stroke-width="1" stroke-linejoin="miter"/></svg><svg class="a" style="left:491px;top:385px" width="20" height="20" viewBox="0 0 20 20"><rect width="20" height="20" fill="#dcdcf4"/><rect x="3" y="3" width="14" height="14" fill="#c0c0c0"/><path d="M2.5 17 V2.5 H17" fill="none" stroke="#2f4f4f" stroke-width="1"/><path d="M0.5 19.5 H19.5 V0.5" fill="none" stroke="#2f4f4f" stroke-width="1"/><path d="M6.5 11.4 V17 M13.5 6 V17 M6.5 11.4 L13.5 6" stroke="#ff0000" stroke-width="1.2" fill="none"/><circle cx="6.5" cy="11.4" r="2.6" fill="#ff0000"/><circle cx="13.5" cy="6" r="2.6" fill="#ff0000"/></svg><svg class="a" style="left:513px;top:385px" width="20" height="20" viewBox="0 0 20 20"><rect width="20" height="20" fill="#dcdcf4"/><rect x="3" y="3" width="14" height="14" fill="#c0c0c0"/><path d="M2.5 17 V2.5 H17" fill="none" stroke="#2f4f4f" stroke-width="1"/><path d="M0.5 19.5 H19.5 V0.5" fill="none" stroke="#2f4f4f" stroke-width="1"/><g stroke="#2f4f4f" stroke-width="1.1" fill="none"><path d="M8.6 8.6 L4.6 4.6 M4.6 7.6 V4.6 H7.6"/><path d="M11.4 8.6 L15.4 4.6 M12.4 4.6 H15.4 V7.6"/><path d="M8.6 11.4 L4.6 15.4 M4.6 12.4 V15.4 H7.6"/><path d="M11.4 11.4 L15.4 15.4 M12.4 15.4 H15.4 V12.4"/></g></svg>
<svg class="a plots" style="left:0;top:0" width="1113" height="712" viewBox="0 0 1113 712" font-family='"Liberation Sans", sans-serif' fill="#000">
<rect x="43" y="84" width="463" height="190" fill="#fff"/>
<path d="M64.5 84 V274" stroke="#c3c3c3" stroke-width="1"/><path d="M64.5 84 v4.5 M64.5 274 v-4.5" stroke="#000" stroke-width="1"/><path d="M106.5 84 V274" stroke="#c3c3c3" stroke-width="1"/><path d="M106.5 84 v4.5 M106.5 274 v-4.5" stroke="#000" stroke-width="1"/><path d="M148.5 84 V274" stroke="#c3c3c3" stroke-width="1"/><path d="M148.5 84 v4.5 M148.5 274 v-4.5" stroke="#000" stroke-width="1"/><path d="M190.5 84 V274" stroke="#c3c3c3" stroke-width="1"/><path d="M190.5 84 v4.5 M190.5 274 v-4.5" stroke="#000" stroke-width="1"/><path d="M232.5 84 V274" stroke="#c3c3c3" stroke-width="1"/><path d="M232.5 84 v4.5 M232.5 274 v-4.5" stroke="#000" stroke-width="1"/><path d="M274.5 84 V274" stroke="#c3c3c3" stroke-width="1"/><path d="M274.5 84 v4.5 M274.5 274 v-4.5" stroke="#000" stroke-width="1"/><path d="M316.5 84 V274" stroke="#c3c3c3" stroke-width="1"/><path d="M316.5 84 v4.5 M316.5 274 v-4.5" stroke="#000" stroke-width="1"/><path d="M358.5 84 V274" stroke="#c3c3c3" stroke-width="1"/><path d="M358.5 84 v4.5 M358.5 274 v-4.5" stroke="#000" stroke-width="1"/><path d="M400.5 84 V274" stroke="#c3c3c3" stroke-width="1"/><path d="M400.5 84 v4.5 M400.5 274 v-4.5" stroke="#000" stroke-width="1"/><path d="M442.5 84 V274" stroke="#c3c3c3" stroke-width="1"/><path d="M442.5 84 v4.5 M442.5 274 v-4.5" stroke="#000" stroke-width="1"/><path d="M485.5 84 V274" stroke="#c3c3c3" stroke-width="1"/><path d="M485.5 84 v4.5 M485.5 274 v-4.5" stroke="#000" stroke-width="1"/>
<path d="M43 266.5 H506" stroke="#c3c3c3" stroke-width="1"/><path d="M43 266.5 h4.5 M506 266.5 h-4.5" stroke="#000" stroke-width="1"/><path d="M43 243.5 H506" stroke="#c3c3c3" stroke-width="1"/><path d="M43 243.5 h4.5 M506 243.5 h-4.5" stroke="#000" stroke-width="1"/><path d="M43 220.5 H506" stroke="#c3c3c3" stroke-width="1"/><path d="M43 220.5 h4.5 M506 220.5 h-4.5" stroke="#000" stroke-width="1"/><path d="M43 197.5 H506" stroke="#c3c3c3" stroke-width="1"/><path d="M43 197.5 h4.5 M506 197.5 h-4.5" stroke="#000" stroke-width="1"/><path d="M43 175.5 H506" stroke="#c3c3c3" stroke-width="1"/><path d="M43 175.5 h4.5 M506 175.5 h-4.5" stroke="#000" stroke-width="1"/><path d="M43 152.5 H506" stroke="#c3c3c3" stroke-width="1"/><path d="M43 152.5 h4.5 M506 152.5 h-4.5" stroke="#000" stroke-width="1"/><path d="M43 129.5 H506" stroke="#c3c3c3" stroke-width="1"/><path d="M43 129.5 h4.5 M506 129.5 h-4.5" stroke="#000" stroke-width="1"/><path d="M43 106.5 H506" stroke="#c3c3c3" stroke-width="1"/><path d="M43 106.5 h4.5 M506 106.5 h-4.5" stroke="#000" stroke-width="1"/>
<rect x="43.5" y="84.5" width="463" height="190" fill="none" stroke="#000" stroke-width="1.3"/>
<text x="274" y="79" font-size="14" text-anchor="middle" font-weight="bold" textLength="138" lengthAdjust="spacing">Average Power Plot</text>
<text x="64.5" y="293" font-size="12" text-anchor="middle" >0.0</text>
<text x="106.5" y="293" font-size="12" text-anchor="middle" >0.2</text>
<text x="148.5" y="293" font-size="12" text-anchor="middle" >0.4</text>
<text x="190.5" y="293" font-size="12" text-anchor="middle" >0.6</text>
<text x="232.5" y="293" font-size="12" text-anchor="middle" >0.8</text>
<text x="274.5" y="293" font-size="12" text-anchor="middle" >1.0</text>
<text x="316.5" y="293" font-size="12" text-anchor="middle" >1.2</text>
<text x="358.5" y="293" font-size="12" text-anchor="middle" >1.4</text>
<text x="400.5" y="293" font-size="12" text-anchor="middle" >1.6</text>
<text x="442.5" y="293" font-size="12" text-anchor="middle" >1.8</text>
<text x="485.5" y="293" font-size="12" text-anchor="middle" >2.0</text>
<text x="38.5" y="266" font-size="12" text-anchor="end" >0.0</text>
<text x="38.5" y="251" font-size="12" text-anchor="end" >0.2</text>
<text x="38.5" y="228" font-size="12" text-anchor="end" >0.4</text>
<text x="38.5" y="205" font-size="12" text-anchor="end" >0.6</text>
<text x="38.5" y="183" font-size="12" text-anchor="end" >0.8</text>
<text x="38.5" y="160" font-size="12" text-anchor="end" >1.0</text>
<text x="38.5" y="137" font-size="12" text-anchor="end" >1.2</text>
<text x="38.5" y="114" font-size="12" text-anchor="end" >1.4</text>
<text x="501" y="317" font-size="12" text-anchor="start" >x10</text>
<text x="520" y="309" font-size="9" text-anchor="start" >-2</text>
<path d="M64.5 266 L64.5 92.5 L64.5 141.5 L66.5 141.5 L66.5 159.5 L67.5 160.5 L85 160.5 L85.5 161.5 H86.0 V160.5 H87.0 V159.5 H87.5 V158.5 H88.0 V155.5 H88.5 V153.5 H89.0 V152.5 H89.5 V151.5 H90.0 V150.5 H91.0 V148.5 H91.5 V146.5 H92.0 V145.5 H92.5 V144.5 H93.0 V143.5 H93.5 V142.5 H94.0 V141.5 H94.5 V140.5 H95.5 V139.5 H96.5 V138.5 H97.5 V137.5 H98.0 V136.5 H99.0 V135.5 H99.5 V134.5 H100.5 V133.5 H101.5 V132.5 H102.5 V131.5 H103.5 V130.5 H105.0 V129.5 H107.0 V128.5 H108.0 V127.5 H109.0 V126.5 H110.0 V125.5 H111.0 V124.5 H112.5 V123.5 H114.5 V122.5 H116.0 V121.5 H118.0 V120.5 H120.0 V119.5 H122.0 V118.5 H124.0 V117.5 H126.5 V116.5 H129.5 V115.5 H132.5 V114.5 H135.5 V113.5 H139.5 V112.5 H143.0 V111.5 H147.0 V110.5 H151.5 V109.5 H156.5 V108.5 H162.5 V107.5 H169.5 V106.5 H183.5 V105.5 H191 V104.5 H203.5 V103.5 H217 V102.5 H232.5 V101.5 H256 V100.5 H282.5 V99.5 H321.5 V98.5 H375 V97.5 H456.5 V96.5 H485" fill="none" stroke="#ff0000" stroke-width="1.05" stroke-linejoin="miter"/>
<rect x="588" y="83" width="474" height="214" fill="#fff"/>
<path d="M609.5 83 V297" stroke="#c3c3c3" stroke-width="1"/><path d="M609.5 83 v4.5 M609.5 297 v-4.5" stroke="#000" stroke-width="1"/><path d="M717.5 83 V297" stroke="#c3c3c3" stroke-width="1"/><path d="M717.5 83 v4.5 M717.5 297 v-4.5" stroke="#000" stroke-width="1"/><path d="M825.5 83 V297" stroke="#c3c3c3" stroke-width="1"/><path d="M825.5 83 v4.5 M825.5 297 v-4.5" stroke="#000" stroke-width="1"/><path d="M932.5 83 V297" stroke="#c3c3c3" stroke-width="1"/><path d="M932.5 83 v4.5 M932.5 297 v-4.5" stroke="#000" stroke-width="1"/>
<path d="M588 288.5 H1062" stroke="#c3c3c3" stroke-width="1"/><path d="M588 288.5 h4.5 M1062 288.5 h-4.5" stroke="#000" stroke-width="1"/><path d="M588 261.5 H1062" stroke="#c3c3c3" stroke-width="1"/><path d="M588 261.5 h4.5 M1062 261.5 h-4.5" stroke="#000" stroke-width="1"/><path d="M588 234.5 H1062" stroke="#c3c3c3" stroke-width="1"/><path d="M588 234.5 h4.5 M1062 234.5 h-4.5" stroke="#000" stroke-width="1"/><path d="M588 208.5 H1062" stroke="#c3c3c3" stroke-width="1"/><path d="M588 208.5 h4.5 M1062 208.5 h-4.5" stroke="#000" stroke-width="1"/><path d="M588 181.5 H1062" stroke="#c3c3c3" stroke-width="1"/><path d="M588 181.5 h4.5 M1062 181.5 h-4.5" stroke="#000" stroke-width="1"/><path d="M588 154.5 H1062" stroke="#c3c3c3" stroke-width="1"/><path d="M588 154.5 h4.5 M1062 154.5 h-4.5" stroke="#000" stroke-width="1"/><path d="M588 128.5 H1062" stroke="#c3c3c3" stroke-width="1"/><path d="M588 128.5 h4.5 M1062 128.5 h-4.5" stroke="#000" stroke-width="1"/><path d="M588 101.5 H1062" stroke="#c3c3c3" stroke-width="1"/><path d="M588 101.5 h4.5 M1062 101.5 h-4.5" stroke="#000" stroke-width="1"/>
<rect x="589" y="261" width="46" height="27" fill="#ff0000"/>
<rect x="690" y="270" width="53" height="18" fill="#ff0000"/>
<rect x="798" y="93" width="53" height="195" fill="#ff0000"/>
<rect x="905" y="234" width="53" height="54" fill="#ff0000"/>
<rect x="588.5" y="83.5" width="474" height="214" fill="none" stroke="#000" stroke-width="1.3"/>
<text x="825" y="78" font-size="14" text-anchor="middle" font-weight="bold" textLength="103" lengthAdjust="spacing">Power Percent</text>
<text x="583.5" y="288" font-size="12" text-anchor="end" >0</text>
<text x="583.5" y="269" font-size="12" text-anchor="end" >5</text>
<text x="583.5" y="242" font-size="12" text-anchor="end" >10</text>
<text x="583.5" y="216" font-size="12" text-anchor="end" >15</text>
<text x="583.5" y="189" font-size="12" text-anchor="end" >20</text>
<text x="583.5" y="162" font-size="12" text-anchor="end" >25</text>
<text x="583.5" y="136" font-size="12" text-anchor="end" >30</text>
<text x="583.5" y="109" font-size="12" text-anchor="end" >35</text>
<text x="609.5" y="316" font-size="12" text-anchor="middle" >ARM</text>
<text x="717.5" y="316" font-size="12" text-anchor="middle" >Cache</text>
<text x="825.5" y="316" font-size="12" text-anchor="middle" >HW_Engine</text>
<text x="932.5" y="316" font-size="12" text-anchor="middle" >DRAM</text>
<text x="825" y="332" font-size="12" text-anchor="middle" >Device Name</text>
<text transform="translate(565.5 182.5) rotate(-90)" font-size="12" text-anchor="middle">Percentage (%)</text>
<rect x="604" y="426" width="465" height="227" fill="#fff"/>
<path d="M647.5 426 V653" stroke="#c3c3c3" stroke-width="1"/><path d="M647.5 426 v4.5 M647.5 653 v-4.5" stroke="#000" stroke-width="1"/><path d="M693.5 426 V653" stroke="#c3c3c3" stroke-width="1"/><path d="M693.5 426 v4.5 M693.5 653 v-4.5" stroke="#000" stroke-width="1"/><path d="M740.5 426 V653" stroke="#c3c3c3" stroke-width="1"/><path d="M740.5 426 v4.5 M740.5 653 v-4.5" stroke="#000" stroke-width="1"/><path d="M787.5 426 V653" stroke="#c3c3c3" stroke-width="1"/><path d="M787.5 426 v4.5 M787.5 653 v-4.5" stroke="#000" stroke-width="1"/><path d="M834.5 426 V653" stroke="#c3c3c3" stroke-width="1"/><path d="M834.5 426 v4.5 M834.5 653 v-4.5" stroke="#000" stroke-width="1"/><path d="M881.5 426 V653" stroke="#c3c3c3" stroke-width="1"/><path d="M881.5 426 v4.5 M881.5 653 v-4.5" stroke="#000" stroke-width="1"/><path d="M928.5 426 V653" stroke="#c3c3c3" stroke-width="1"/><path d="M928.5 426 v4.5 M928.5 653 v-4.5" stroke="#000" stroke-width="1"/><path d="M975.5 426 V653" stroke="#c3c3c3" stroke-width="1"/><path d="M975.5 426 v4.5 M975.5 653 v-4.5" stroke="#000" stroke-width="1"/><path d="M1022.5 426 V653" stroke="#c3c3c3" stroke-width="1"/><path d="M1022.5 426 v4.5 M1022.5 653 v-4.5" stroke="#000" stroke-width="1"/>
<path d="M604 645.5 H1069" stroke="#c3c3c3" stroke-width="1"/><path d="M604 645.5 h4.5 M1069 645.5 h-4.5" stroke="#000" stroke-width="1"/><path d="M604 617.5 H1069" stroke="#c3c3c3" stroke-width="1"/><path d="M604 617.5 h4.5 M1069 617.5 h-4.5" stroke="#000" stroke-width="1"/><path d="M604 589.5 H1069" stroke="#c3c3c3" stroke-width="1"/><path d="M604 589.5 h4.5 M1069 589.5 h-4.5" stroke="#000" stroke-width="1"/><path d="M604 561.5 H1069" stroke="#c3c3c3" stroke-width="1"/><path d="M604 561.5 h4.5 M1069 561.5 h-4.5" stroke="#000" stroke-width="1"/><path d="M604 533.5 H1069" stroke="#c3c3c3" stroke-width="1"/><path d="M604 533.5 h4.5 M1069 533.5 h-4.5" stroke="#000" stroke-width="1"/><path d="M604 504.5 H1069" stroke="#c3c3c3" stroke-width="1"/><path d="M604 504.5 h4.5 M1069 504.5 h-4.5" stroke="#000" stroke-width="1"/><path d="M604 476.5 H1069" stroke="#c3c3c3" stroke-width="1"/><path d="M604 476.5 h4.5 M1069 476.5 h-4.5" stroke="#000" stroke-width="1"/><path d="M604 448.5 H1069" stroke="#c3c3c3" stroke-width="1"/><path d="M604 448.5 h4.5 M1069 448.5 h-4.5" stroke="#000" stroke-width="1"/>
<path d="M625.5 451.5 L766.5 437.5 L836.5 536.5 L977.5 584.5 L1047.5 643.5" fill="none" stroke="#ff0000" stroke-width="1.1"/>
<rect x="623.0" y="449.0" width="5" height="5" fill="#ff0000"/>
<rect x="764.0" y="435.0" width="5" height="5" fill="#ff0000"/>
<rect x="834.0" y="534.0" width="5" height="5" fill="#ff0000"/>
<rect x="975.0" y="582.0" width="5" height="5" fill="#ff0000"/>
<rect x="1045.0" y="641.0" width="5" height="5" fill="#ff0000"/>
<rect x="604.5" y="426.5" width="465" height="227" fill="none" stroke="#000" stroke-width="1.3"/>
<text x="836.5" y="421" font-size="14" text-anchor="middle" font-weight="bold" textLength="216" lengthAdjust="spacing">Video Frames Completion Time</text>
<text x="647.5" y="672" font-size="12" text-anchor="middle" >0.2</text>
<text x="693.5" y="672" font-size="12" text-anchor="middle" >0.4</text>
<text x="740.5" y="672" font-size="12" text-anchor="middle" >0.6</text>
<text x="787.5" y="672" font-size="12" text-anchor="middle" >0.8</text>
<text x="834.5" y="672" font-size="12" text-anchor="middle" >1.0</text>
<text x="881.5" y="672" font-size="12" text-anchor="middle" >1.2</text>
<text x="928.5" y="672" font-size="12" text-anchor="middle" >1.4</text>
<text x="975.5" y="672" font-size="12" text-anchor="middle" >1.6</text>
<text x="1022.5" y="672" font-size="12" text-anchor="middle" >1.8</text>
<text x="599.5" y="645" font-size="12" text-anchor="end" >1.425</text>
<text x="599.5" y="625" font-size="12" text-anchor="end" >1.430</text>
<text x="599.5" y="597" font-size="12" text-anchor="end" >1.435</text>
<text x="599.5" y="569" font-size="12" text-anchor="end" >1.440</text>
<text x="599.5" y="541" font-size="12" text-anchor="end" >1.445</text>
<text x="599.5" y="512" font-size="12" text-anchor="end" >1.450</text>
<text x="599.5" y="484" font-size="12" text-anchor="end" >1.455</text>
<text x="599.5" y="456" font-size="12" text-anchor="end" >1.460</text>
<text x="554" y="421" font-size="12" text-anchor="start" >x10</text>
<text x="573" y="413" font-size="9" text-anchor="start" >4</text>
<text x="1064" y="696" font-size="12" text-anchor="start" >x10</text>
<text x="1083" y="688" font-size="9" text-anchor="start" >-2</text>
<text x="836" y="695.5" font-size="12" text-anchor="middle" >time (seconds)</text>
<text transform="translate(564 532) rotate(-90)" font-size="12" text-anchor="middle">frames (number)</text>
<rect x="65" y="417" width="383" height="235" fill="#fff"/>
<path d="M66 436.5 H82.5 V440.5 H96.5 V436.5 M98.5 440.5 V436.5 M96.5 436.5 H115.5 V440.5 H129.5 V436.5 M131.5 440.5 V436.5 M129.5 436.5 H149.5 V440.5 H162.5 V436.5 M165.5 440.5 V436.5 M162.5 436.5 H182.5 V440.5 H196.5 V436.5 M198.5 440.5 V436.5 M196.5 436.5 H216.5 V440.5 H229.5 V436.5 M232.5 440.5 V436.5 M229.5 436.5 H249.5 V440.5 H263.5 V436.5 M265.5 440.5 V436.5 M263.5 436.5 H282.5 V440.5 H296.5 V436.5 M298.5 440.5 V436.5 M296.5 436.5 H316.5 V440.5 H329.5 V436.5 M332.5 440.5 V436.5 M329.5 436.5 H349.5 V440.5 H363.5 V436.5 M365.5 440.5 V436.5 M363.5 436.5 H383.5 V440.5 H396.5 V436.5 M399.5 440.5 V436.5 M396.5 436.5 H416.5 V440.5 H429.5 V436.5 M432.5 440.5 V436.5 M429.5 436.5 H448" fill="none" stroke="#ff69b4" stroke-width="1" shape-rendering="crispEdges"/>
<path d="M66 449.5 H83.5 V445.5 H85.5 V449.5 H116.5 V445.5 H118.5 V449.5 H149.5 V445.5 H151.5 V449.5 H183.5 V445.5 H185.5 V449.5 H216.5 V445.5 H218.5 V449.5 H249.5 V445.5 H251.5 V449.5 H283.5 V445.5 H285.5 V449.5 H316.5 V445.5 H318.5 V449.5 H350.5 V445.5 H352.5 V449.5 H383.5 V445.5 H385.5 V449.5 H416.5 V445.5 H418.5 V449.5 H448" fill="none" stroke="#6a0dad" stroke-width="1.2" shape-rendering="crispEdges"/>
<path d="M66 493.5 H85.5 V489.5 H96.5 V493.5 H118.5 V489.5 H129.5 V493.5 H152.5 V489.5 H163.5 V493.5 H185.5 V489.5 H196.5 V493.5 H219.5 V489.5 H230.5 V493.5 H252.5 V489.5 H263.5 V493.5 H285.5 V489.5 H296.5 V493.5 H319.5 V489.5 H330.5 V493.5 H352.5 V489.5 H363.5 V493.5 H386.5 V489.5 H397.5 V493.5 H419.5 V489.5 H430.5 V493.5 H448" fill="none" stroke="#a0a0a0" stroke-width="1" shape-rendering="crispEdges"/>
<path d="M66 520.5 H448" stroke="#4b0082" stroke-width="1.2"/>
<path d="M66 529.5 H448" stroke="#14ff14" stroke-width="1.2"/>
<path d="M66 555.5 H82.5 V551.5 H83.5 V555.5 H149.5 V551.5 H149.5 V555.5 H215.5 V551.5 H217.5 V555.5 H282.5 V551.5 H283.5 V555.5 H349.5 V551.5 H349.5 V555.5 H416.5 V551.5 H416.5 V555.5 H448" fill="none" stroke="#45ab1f" stroke-width="1.1" shape-rendering="crispEdges"/>
<path d="M66 564.5 H70.5 V560.5 H73.5 V564.5 H76.5 V560.5 H78.5 V564.5 H82.5 V560.5 H85.5 V564.5 H87.5 V560.5 H88.5 V564.5 H92.5 V560.5 H94.5 V564.5 H100.5 V560.5 H103.5 V564.5 H105.5 V560.5 H106.5 V564.5 H109.5 V560.5 H111.5 V564.5 H113.5 V560.5 H114.5 V564.5 H118.5 V560.5 H119.5 V564.5 H123.5 V560.5 H125.5 V564.5 H128.5 V560.5 H131.5 V564.5 H137.5 V560.5 H138.5 V564.5 H142.5 V560.5 H143.5 V564.5 H147.5 V560.5 H148.5 V564.5 H150.5 V560.5 H151.5 V564.5 H153.5 V560.5 H154.5 V564.5 H158.5 V560.5 H159.5 V564.5 H162.5 V560.5 H164.5 V564.5 H167.5 V560.5 H170.5 V564.5 H172.5 V560.5 H175.5 V564.5 H177.5 V560.5 H179.5 V564.5 H182.5 V560.5 H183.5 V564.5 H189.5 V560.5 H190.5 V564.5 H193.5 V560.5 H195.5 V564.5 H198.5 V560.5 H201.5 V564.5 H203.5 V560.5 H205.5 V564.5 H208.5 V560.5 H209.5 V564.5 H213.5 V560.5 H215.5 V564.5 H217.5 V560.5 H218.5 V564.5 H222.5 V560.5 H223.5 V564.5 H226.5 V560.5 H227.5 V564.5 H230.5 V560.5 H232.5 V564.5 H234.5 V560.5 H235.5 V564.5 H241.5 V560.5 H242.5 V564.5 H244.5 V560.5 H245.5 V564.5 H247.5 V560.5 H249.5 V564.5 H252.5 V560.5 H254.5 V564.5 H257.5 V560.5 H258.5 V564.5 H262.5 V560.5 H263.5 V564.5 H269.5 V560.5 H271.5 V564.5 H274.5 V560.5 H275.5 V564.5 H278.5 V560.5 H280.5 V564.5 H282.5 V560.5 H284.5 V564.5 H286.5 V560.5 H287.5 V564.5 H289.5 V560.5 H290.5 V564.5 H292.5 V560.5 H293.5 V564.5 H296.5 V560.5 H298.5 V564.5 H300.5 V560.5 H303.5 V564.5 H305.5 V560.5 H307.5 V564.5 H311.5 V560.5 H312.5 V564.5 H318.5 V560.5 H319.5 V564.5 H322.5 V560.5 H324.5 V564.5 H326.5 V560.5 H328.5 V564.5 H331.5 V560.5 H332.5 V564.5 H334.5 V560.5 H336.5 V564.5 H340.5 V560.5 H342.5 V564.5 H344.5 V560.5 H345.5 V564.5 H347.5 V560.5 H349.5 V564.5 H353.5 V560.5 H356.5 V564.5 H358.5 V560.5 H359.5 V564.5 H361.5 V560.5 H362.5 V564.5 H365.5 V560.5 H367.5 V564.5 H369.5 V560.5 H372.5 V564.5 H375.5 V560.5 H377.5 V564.5 H380.5 V560.5 H381.5 V564.5 H383.5 V560.5 H384.5 V564.5 H386.5 V560.5 H389.5 V564.5 H395.5 V560.5 H396.5 V564.5 H398.5 V560.5 H401.5 V564.5 H404.5 V560.5 H406.5 V564.5 H410.5 V560.5 H412.5 V564.5 H414.5 V560.5 H417.5 V564.5 H420.5 V560.5 H423.5 V564.5 H425.5 V560.5 H427.5 V564.5 H429.5 V560.5 H430.5 V564.5 H433.5 V560.5 H434.5 V564.5 H438.5 V560.5 H439.5 V564.5 H445.5 V560.5 H446.5 V564.5 H448" fill="none" stroke="#ff7f50" stroke-width="1.0" shape-rendering="crispEdges"/>
<path d="M182.5 564 V556 M316.5 564 V557" stroke="#ff7f50" stroke-width="1" shape-rendering="crispEdges"/>
<path d="M66 596.4 H448" stroke="#00aaaa" stroke-width="1.5"/>
<path d="M67 596 h1 v5 h-1 Z M72 596 h1 v5 h-1 Z M78 596 h1 v5 h-1 Z M83 596 h1 v5 h-1 Z M90 596 h1 v5 h-1 Z M97 596 h2 v5 h-2 Z M102 596 h2 v5 h-2 Z M108 596 h1 v5 h-1 Z M115 596 h1 v5 h-1 Z M118 596 h1 v5 h-1 Z M123 596 h1 v5 h-1 Z M126 596 h1 v5 h-1 Z M133 596 h1 v5 h-1 Z M137 596 h1 v5 h-1 Z M142 596 h1 v5 h-1 Z M147 596 h1 v5 h-1 Z M150 596 h1 v5 h-1 Z M155 596 h1 v5 h-1 Z M161 596 h1 v5 h-1 Z M167 596 h1 v5 h-1 Z M170 596 h1 v5 h-1 Z M176 596 h1 v5 h-1 Z M179 596 h1 v5 h-1 Z M184 596 h1 v5 h-1 Z M189 596 h1 v5 h-1 Z M194 596 h1 v5 h-1 Z M198 596 h1 v5 h-1 Z M204 596 h1 v5 h-1 Z M209 596 h1 v5 h-1 Z M212 596 h1 v5 h-1 Z M216 596 h2 v5 h-2 Z M223 596 h1 v5 h-1 Z M226 596 h2 v5 h-2 Z M232 596 h2 v5 h-2 Z M240 596 h1 v5 h-1 Z M244 596 h1 v5 h-1 Z M248 596 h2 v5 h-2 Z M254 596 h1 v5 h-1 Z M258 596 h1 v5 h-1 Z M263 596 h1 v5 h-1 Z M267 596 h1 v5 h-1 Z M272 596 h1 v5 h-1 Z M275 596 h1 v5 h-1 Z M279 596 h1 v5 h-1 Z M282 596 h1 v5 h-1 Z M285 596 h2 v5 h-2 Z M291 596 h2 v5 h-2 Z M296 596 h2 v5 h-2 Z M302 596 h1 v5 h-1 Z M307 596 h2 v5 h-2 Z M311 596 h1 v5 h-1 Z M317 596 h1 v5 h-1 Z M323 596 h1 v5 h-1 Z M330 596 h1 v5 h-1 Z M334 596 h2 v5 h-2 Z M339 596 h1 v5 h-1 Z M342 596 h1 v5 h-1 Z M345 596 h1 v5 h-1 Z M352 596 h1 v5 h-1 Z M356 596 h1 v5 h-1 Z M362 596 h1 v5 h-1 Z M368 596 h2 v5 h-2 Z M375 596 h1 v5 h-1 Z M380 596 h1 v5 h-1 Z M386 596 h2 v5 h-2 Z M390 596 h1 v5 h-1 Z M395 596 h2 v5 h-2 Z M401 596 h1 v5 h-1 Z M405 596 h1 v5 h-1 Z M410 596 h1 v5 h-1 Z M415 596 h1 v5 h-1 Z M422 596 h1 v5 h-1 Z M425 596 h1 v5 h-1 Z M428 596 h1 v5 h-1 Z M434 596 h1 v5 h-1 Z M437 596 h1 v5 h-1 Z M441 596 h1 v5 h-1 Z " fill="#00aaaa" shape-rendering="crispEdges"/>
<path d="M66 609.3 H448" stroke="#0000ff" stroke-width="1.5"/><path d="M78 605.0 h2 V609.3 h-2 Z M88 605.0 h1 V609.3 h-1 Z M91 605.0 h2 V609.3 h-2 Z M96 605.0 h5 V609.3 h-5 Z M103 605.0 h2 V609.3 h-2 Z M113 605.0 h3 V609.3 h-3 Z M117 605.0 h6 V609.3 h-6 Z M129 605.0 h1 V609.3 h-1 Z M136 605.0 h2 V609.3 h-2 Z M144 605.0 h1 V609.3 h-1 Z M147 605.0 h4 V609.3 h-4 Z M154 605.0 h2 V609.3 h-2 Z M157 605.0 h2 V609.3 h-2 Z M167 605.0 h1 V609.3 h-1 Z M170 605.0 h1 V609.3 h-1 Z M173 605.0 h5 V609.3 h-5 Z M188 605.0 h5 V609.3 h-5 Z M196 605.0 h1 V609.3 h-1 Z M200 605.0 h3 V609.3 h-3 Z M209 605.0 h1 V609.3 h-1 Z M216 605.0 h4 V609.3 h-4 Z M221 605.0 h4 V609.3 h-4 Z M228 605.0 h6 V609.3 h-6 Z M235 605.0 h2 V609.3 h-2 Z M240 605.0 h5 V609.3 h-5 Z M252 605.0 h1 V609.3 h-1 Z M256 605.0 h1 V609.3 h-1 Z M259 605.0 h2 V609.3 h-2 Z M262 605.0 h4 V609.3 h-4 Z M269 605.0 h2 V609.3 h-2 Z M277 605.0 h4 V609.3 h-4 Z M284 605.0 h1 V609.3 h-1 Z M286 605.0 h2 V609.3 h-2 Z M290 605.0 h4 V609.3 h-4 Z M297 605.0 h1 V609.3 h-1 Z M309 605.0 h2 V609.3 h-2 Z M317 605.0 h1 V609.3 h-1 Z M333 605.0 h2 V609.3 h-2 Z M337 605.0 h5 V609.3 h-5 Z M344 605.0 h2 V609.3 h-2 Z M354 605.0 h5 V609.3 h-5 Z M360 605.0 h4 V609.3 h-4 Z M376 605.0 h4 V609.3 h-4 Z M389 605.0 h1 V609.3 h-1 Z M408 605.0 h1 V609.3 h-1 Z M412 605.0 h1 V609.3 h-1 Z M415 605.0 h1 V609.3 h-1 Z M417 605.0 h2 V609.3 h-2 Z M429 605.0 h4 V609.3 h-4 Z M435 605.0 h2 V609.3 h-2 Z M438 605.0 h4 V609.3 h-4 Z " fill="#0000ff" shape-rendering="crispEdges"/><path d="M66.5 609.3 V605.5 H70.5 V609.3 M73.5 609.3 V605.5 H75.5 V609.3 M81.5 609.3 V605.5 H85.5 V609.3 M108.5 609.3 V605.5 H110.5 V609.3 M161.5 609.3 V605.5 H164.5 V609.3 M184.5 609.3 V605.5 H186.5 V609.3 M246.5 609.3 V605.5 H248.5 V609.3 M301.5 609.3 V605.5 H305.5 V609.3 M324.5 609.3 V605.5 H326.5 V609.3 M347.5 609.3 V605.5 H351.5 V609.3 M366.5 609.3 V605.5 H369.5 V609.3 M383.5 609.3 V605.5 H385.5 V609.3 M391.5 609.3 V605.5 H395.5 V609.3 M402.5 609.3 V605.5 H405.5 V609.3 M422.5 609.3 V605.5 H426.5 V609.3 " fill="none" stroke="#0000ff" stroke-width="1" shape-rendering="crispEdges"/>
<path d="M66 617.5 H448" stroke="#ff0000" stroke-width="1.5"/><path d="M78 613.0 h2 V617.5 h-2 Z M88 613.0 h1 V617.5 h-1 Z M91 613.0 h2 V617.5 h-2 Z M96 613.0 h5 V617.5 h-5 Z M103 613.0 h2 V617.5 h-2 Z M113 613.0 h3 V617.5 h-3 Z M117 613.0 h6 V617.5 h-6 Z M129 613.0 h1 V617.5 h-1 Z M136 613.0 h2 V617.5 h-2 Z M144 613.0 h1 V617.5 h-1 Z M147 613.0 h4 V617.5 h-4 Z M154 613.0 h2 V617.5 h-2 Z M157 613.0 h2 V617.5 h-2 Z M167 613.0 h1 V617.5 h-1 Z M170 613.0 h1 V617.5 h-1 Z M173 613.0 h5 V617.5 h-5 Z M188 613.0 h5 V617.5 h-5 Z M196 613.0 h1 V617.5 h-1 Z M200 613.0 h3 V617.5 h-3 Z M209 613.0 h1 V617.5 h-1 Z M216 613.0 h4 V617.5 h-4 Z M221 613.0 h4 V617.5 h-4 Z M228 613.0 h6 V617.5 h-6 Z M235 613.0 h2 V617.5 h-2 Z M240 613.0 h5 V617.5 h-5 Z M252 613.0 h1 V617.5 h-1 Z M256 613.0 h1 V617.5 h-1 Z M259 613.0 h2 V617.5 h-2 Z M262 613.0 h4 V617.5 h-4 Z M269 613.0 h2 V617.5 h-2 Z M277 613.0 h4 V617.5 h-4 Z M284 613.0 h1 V617.5 h-1 Z M286 613.0 h2 V617.5 h-2 Z M290 613.0 h4 V617.5 h-4 Z M297 613.0 h1 V617.5 h-1 Z M309 613.0 h2 V617.5 h-2 Z M317 613.0 h1 V617.5 h-1 Z M333 613.0 h2 V617.5 h-2 Z M337 613.0 h5 V617.5 h-5 Z M344 613.0 h2 V617.5 h-2 Z M354 613.0 h5 V617.5 h-5 Z M360 613.0 h4 V617.5 h-4 Z M376 613.0 h4 V617.5 h-4 Z M389 613.0 h1 V617.5 h-1 Z M408 613.0 h1 V617.5 h-1 Z M412 613.0 h1 V617.5 h-1 Z M415 613.0 h1 V617.5 h-1 Z M417 613.0 h2 V617.5 h-2 Z M429 613.0 h4 V617.5 h-4 Z M435 613.0 h2 V617.5 h-2 Z M438 613.0 h4 V617.5 h-4 Z " fill="#ff0000" shape-rendering="crispEdges"/><path d="M66.5 617.5 V613.5 H70.5 V617.5 M73.5 617.5 V613.5 H75.5 V617.5 M81.5 617.5 V613.5 H85.5 V617.5 M108.5 617.5 V613.5 H110.5 V617.5 M161.5 617.5 V613.5 H164.5 V617.5 M184.5 617.5 V613.5 H186.5 V617.5 M246.5 617.5 V613.5 H248.5 V617.5 M301.5 617.5 V613.5 H305.5 V617.5 M324.5 617.5 V613.5 H326.5 V617.5 M347.5 617.5 V613.5 H351.5 V617.5 M366.5 617.5 V613.5 H369.5 V617.5 M383.5 617.5 V613.5 H385.5 V617.5 M391.5 617.5 V613.5 H395.5 V617.5 M402.5 617.5 V613.5 H405.5 V617.5 M422.5 617.5 V613.5 H426.5 V617.5 " fill="none" stroke="#ff0000" stroke-width="1" shape-rendering="crispEdges"/>
<path d="M105.5 417 v4.5 M105.5 652 v-4.5" stroke="#000" stroke-width="1"/><path d="M154.5 417 v4.5 M154.5 652 v-4.5" stroke="#000" stroke-width="1"/><path d="M202.5 417 v4.5 M202.5 652 v-4.5" stroke="#000" stroke-width="1"/><path d="M250.5 417 v4.5 M250.5 652 v-4.5" stroke="#000" stroke-width="1"/><path d="M299.5 417 v4.5 M299.5 652 v-4.5" stroke="#000" stroke-width="1"/><path d="M347.5 417 v4.5 M347.5 652 v-4.5" stroke="#000" stroke-width="1"/><path d="M396.5 417 v4.5 M396.5 652 v-4.5" stroke="#000" stroke-width="1"/><path d="M444.5 417 v4.5 M444.5 652 v-4.5" stroke="#000" stroke-width="1"/>
<rect x="65.5" y="417.5" width="383" height="235" fill="none" stroke="#000" stroke-width="1.3"/>
<text x="256.5" y="412" font-size="14" text-anchor="middle" font-weight="bold" textLength="232" lengthAdjust="spacing">Processor Execution Unit Activity</text>
<text x="104.5" y="671" font-size="12" text-anchor="middle" >7.0330</text>
<text x="153.5" y="671" font-size="12" text-anchor="middle" >7.0332</text>
<text x="201.5" y="671" font-size="12" text-anchor="middle" >7.0334</text>
<text x="249.5" y="671" font-size="12" text-anchor="middle" >7.0336</text>
<text x="298.5" y="671" font-size="12" text-anchor="middle" >7.0338</text>
<text x="346.5" y="671" font-size="12" text-anchor="middle" >7.0340</text>
<text x="395.5" y="671" font-size="12" text-anchor="middle" >7.0342</text>
<text x="443.5" y="671" font-size="12" text-anchor="middle" >7.0344</text>
<text x="61" y="620" font-size="12" text-anchor="end" >Reg_R</text>
<text transform="translate(17.5 527.5) rotate(-90)" font-size="12" text-anchor="middle">State</text>
<text x="256" y="695" font-size="12" text-anchor="middle" >Sim Time (Sec)</text>
<text x="498" y="695" font-size="12" text-anchor="start" >x10</text>
<text x="517" y="687" font-size="9" text-anchor="start" >-3</text>
<text x="509.5" y="432.5" font-size="12" text-anchor="end" >REG_R</text>
<rect x="516" y="424.0" width="6" height="6" fill="#ff0000"/>
<text x="509.5" y="448.5" font-size="12" text-anchor="end" >REG_W</text>
<rect x="516" y="440.0" width="6" height="6" fill="#0000ff"/>
<text x="509.5" y="464.5" font-size="12" text-anchor="end" >INT_1</text>
<rect x="516" y="456.0" width="6" height="6" fill="#00aaaa"/>
<text x="509.5" y="480.5" font-size="12" text-anchor="end" >INT_2</text>
<rect x="516" y="472.0" width="6" height="6" fill="#000000"/>
<text x="509.5" y="496.5" font-size="12" text-anchor="end" >FP_1</text>
<rect x="516" y="488.0" width="6" height="6" fill="#ffa500"/>
<text x="509.5" y="512.5" font-size="12" text-anchor="end" >FP_2</text>
<rect x="516" y="504.0" width="6" height="6" fill="#53868b"/>
<text x="509.5" y="528.5" font-size="12" text-anchor="end" >I_1</text>
<rect x="516" y="520.0" width="6" height="6" fill="#ff7f50"/>
<text x="509.5" y="544.5" font-size="12" text-anchor="end" >D_1</text>
<rect x="516" y="536.0" width="6" height="6" fill="#45ab1f"/>
<text x="509.5" y="560.5" font-size="12" text-anchor="end" >L_2</text>
<rect x="516" y="552.0" width="6" height="6" fill="#90422d"/>
<text x="509.5" y="576.5" font-size="12" text-anchor="end" >Cache</text>
<rect x="516" y="568.0" width="6" height="6" fill="#a0a0a0"/>
<text x="509.5" y="592.5" font-size="12" text-anchor="end" >DRAM</text>
<rect x="516" y="584.0" width="6" height="6" fill="#14ff14"/>
<text x="509.5" y="608.5" font-size="12" text-anchor="end" >Refresh</text>
<rect x="516" y="600.0" width="6" height="6" fill="#4b0082"/>
<text x="509.5" y="624.5" font-size="12" text-anchor="end" >Bus_Ctrl</text>
<rect x="516" y="616.0" width="6" height="6" fill="#6a0dad"/>
<text x="509.5" y="640.5" font-size="12" text-anchor="end" >Bus_Data</text>
<rect x="516" y="632.0" width="6" height="6" fill="#ff69b4"/>
<text x="509.5" y="656.5" font-size="12" text-anchor="end" >AXI Rd</text>
<rect x="516" y="648.0" width="6" height="6" fill="#ffff00"/>
<text x="509.5" y="672.5" font-size="12" text-anchor="end" >AXI Wr</text>
<rect x="516" y="664.0" width="6" height="6" fill="#800000"/>
</svg>

</div></body></html>
